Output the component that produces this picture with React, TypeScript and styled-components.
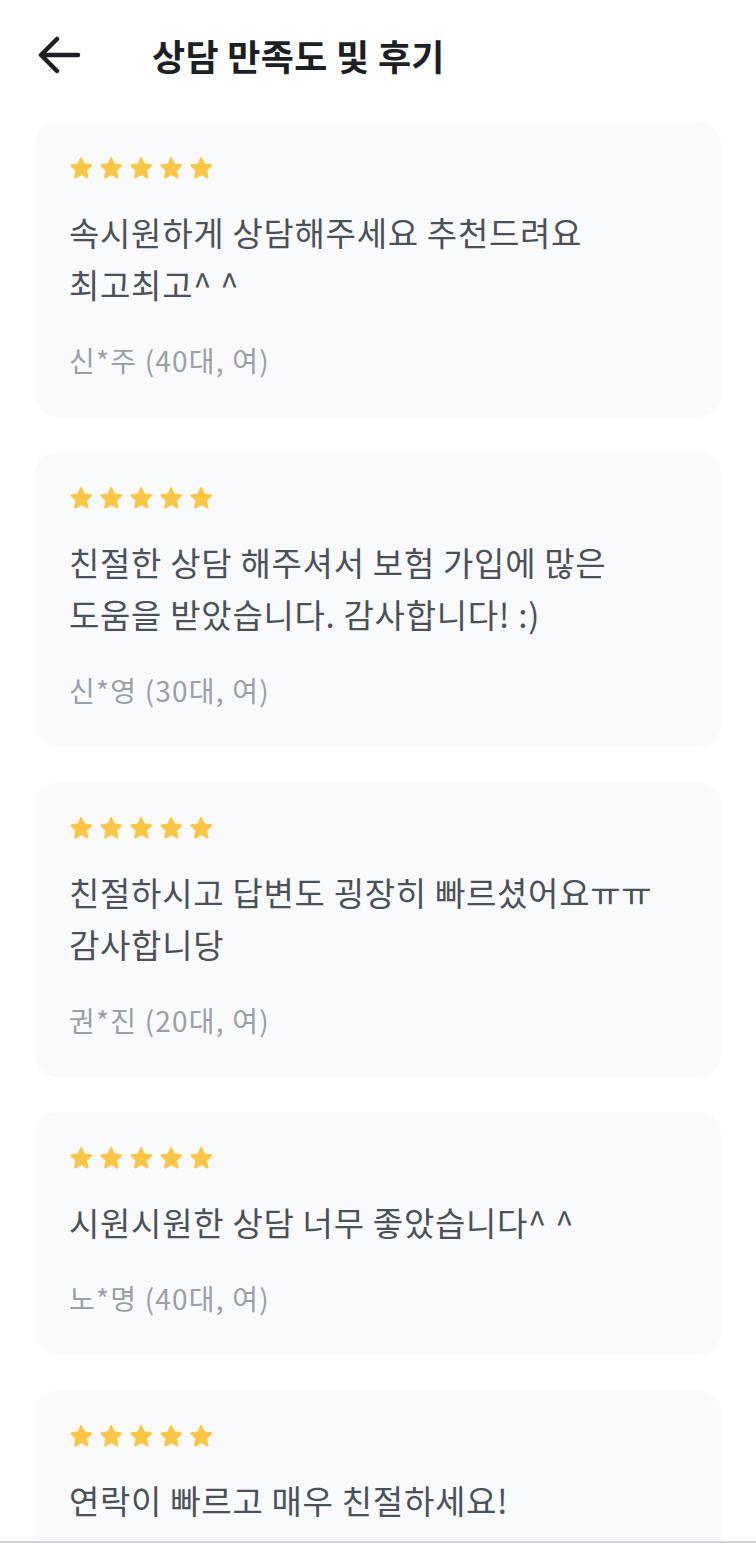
import styled, { createGlobalStyle } from "styled-components";

const GlobalStyle = createGlobalStyle`
  html, body {
    margin: 0;
    padding: 0;
    background: #ffffff;
  }
  body {
    font-family: "Noto Sans CJK KR", "Noto Sans", sans-serif;
  }
`;

const Page = styled.div`
  width: 756px;
  min-height: 1543px;
  background: #ffffff;
  box-sizing: border-box;
`;

const Header = styled.header`
  display: flex;
  align-items: center;
  height: 116px;
  padding: 0 0 6px 38px;
  box-sizing: border-box;
`;

const BackButton = styled.button`
  display: flex;
  align-items: center;
  justify-content: center;
  padding: 0;
  margin: 0 70px 0 0;
  border: none;
  background: none;
  width: 44px;
  height: 40px;
  cursor: pointer;
`;

const Title = styled.h1`
  margin: 0;
  font-size: 36px;
  font-weight: 700;
  color: #1c1f24;
  letter-spacing: 0.3px;
`;

const List = styled.div`
  display: flex;
  flex-direction: column;
  gap: 35px;
  padding: 6px 35px 0;
`;

const Card = styled.article`
  background: #f8fafc;
  border-radius: 22px;
  padding: 33px 34px 39px;
  display: flex;
  flex-direction: column;
`;

const Stars = styled.div`
  display: flex;
  gap: 5px;
  height: 25px;
  align-items: center;
  margin-bottom: 26px;
`;

const Body = styled.p`
  margin: 0;
  font-size: 33px;
  line-height: 52px;
  color: #4b5159;
  letter-spacing: 0.7px;
  white-space: pre-line;
`;

const Author = styled.p`
  margin: 32px 0 0;
  font-size: 28px;
  line-height: 36px;
  color: #9aa0a8;
  letter-spacing: 1.2px;
`;

const BottomLine = styled.div`
  position: fixed;
  left: 0;
  right: 0;
  bottom: 0;
  height: 2px;
  background: #cfd2d6;
`;

const Star = () => (
  <svg width="25" height="24" viewBox="0 0 24 24">
    <path
      d="M12 1.8l2.9 6.2 6.7.8c.6.1.8.8.4 1.2l-5 4.6 1.4 6.7c.1.6-.5 1-1 .7L12 18.6 6.1 22c-.5.3-1.1-.1-1-.7l1.4-6.7-5-4.6c-.4-.4-.2-1.1.4-1.2l6.7-.8L11.1 1.8c.2-.5 1-.5 1.2 0z"
      fill="#fdc544"
      stroke="#fdc544"
      strokeWidth="1"
      strokeLinejoin="round"
    />
  </svg>
);

const BackArrow = () => (
  <svg width="44" height="40" viewBox="0 0 44 40" fill="none">
    <path
      d="M40 20H4M19 4L3 20l16 16"
      stroke="#1c1f24"
      strokeWidth="4.5"
      strokeLinecap="round"
      strokeLinejoin="round"
    />
  </svg>
);

const reviews = [
  { text: "속시원하게 상담해주세요 추천드려요\n최고최고^ ^", author: "신*주 (40대, 여)" },
  { text: "친절한 상담 해주셔서 보험 가입에 많은\n도움을 받았습니다. 감사합니다! :)", author: "신*영 (30대, 여)" },
  { text: "친절하시고 답변도 굉장히 빠르셨어요ㅠㅠ\n감사합니당", author: "권*진 (20대, 여)" },
  { text: "시원시원한 상담 너무 좋았습니다^ ^", author: "노*명 (40대, 여)" },
  { text: "연락이 빠르고 매우 친절하세요!", author: "이*희 (50대, 여)" },
];

const App = () => {
  return (
    <Page>
      <GlobalStyle />
      <Header>
        <BackButton aria-label="뒤로">
          <BackArrow />
        </BackButton>
        <Title>상담 만족도 및 후기</Title>
      </Header>
      <List>
        {reviews.map((r, i) => (
          <Card key={i}>
            <Stars>
              {[0, 1, 2, 3, 4].map((s) => (
                <Star key={s} />
              ))}
            </Stars>
            <Body>{r.text}</Body>
            <Author>{r.author}</Author>
          </Card>
        ))}
      </List>
      <BottomLine />
    </Page>
  );
};

export default App;
